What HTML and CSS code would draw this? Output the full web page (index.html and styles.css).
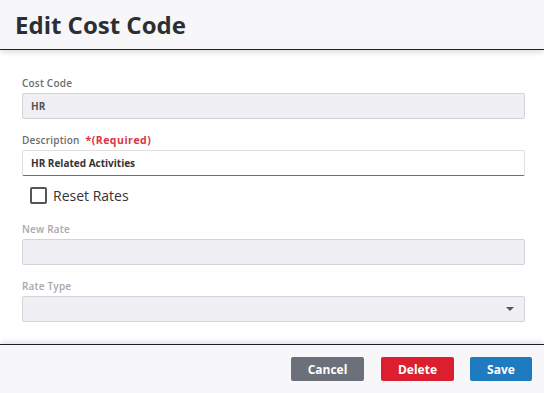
FILE: index.html
```html
<!DOCTYPE html>
<html lang="en">
<head>
    <meta charset="UTF-8">
    <meta name="viewport" content="width=device-width, initial-scale=1.0">
    <title>Edit Cost Code</title>
    <link rel="stylesheet" href="styles.css">
</head>
<body>
    <div class="modal">
        <div class="modal-header">
            <h1>Edit Cost Code</h1>
        </div>

        <div class="modal-body">
            <div class="field">
                <label>Cost Code</label>
                <div class="input disabled">HR</div>
            </div>
            <div class="field">
                <label>Description <span class="required">*(Required)</span></label>
                <div class="input active">HR Related Activities</div>
            </div>
            <div class="check-row">
                <span class="checkbox"></span>
                <span>Reset Rates</span>
            </div>
            <div class="field muted">
                <label>New Rate</label>
                <div class="input disabled"></div>
            </div>
            <div class="field muted">
                <label>Rate Type</label>
                <div class="input disabled select"><span class="caret"></span></div>
            </div>
        </div>

        <div class="modal-footer">
            <button class="btn btn-cancel">Cancel</button>
            <button class="btn btn-delete">Delete</button>
            <button class="btn btn-save">Save</button>
        </div>
    </div>
</body>
</html>
```

FILE: styles.css
```css
body {
    margin: 0;
    font-family: "Open Sans", Arial, sans-serif;
    background: #fff;
    color: #333;
}

.modal {
    display: flex;
    flex-direction: column;
    height: 100vh;
}

.modal-header {
    height: 49px;
    background: #f7f7f9;
    border-bottom: 1px solid #1e2226;
    box-shadow: 0 2px 6px rgba(0, 0, 0, 0.15);
    display: flex;
    align-items: center;
    padding-left: 15px;
    position: relative;
}

.modal-header h1 {
    margin: 0;
    font-size: 24px;
    font-weight: 700;
    color: #2b2f33;
}

.modal-body {
    flex: 1;
    padding: 27px 19px 0 22px;
}

.field {
    margin-bottom: 15px;
}

.field label {
    display: block;
    font-size: 10px;
    line-height: 12px;
    font-weight: 600;
    color: #6c6c6c;
    margin-bottom: 4px;
    letter-spacing: 0.2px;
}

.field.muted label {
    color: #a8a8a8;
}

.required {
    color: #dc3545;
    font-weight: 700;
    font-size: 10.5px;
    letter-spacing: 0.5px;
    margin-left: 3px;
}

.input {
    box-sizing: border-box;
    height: 26px;
    border: 1px solid #d4d4d8;
    border-radius: 2px;
    padding: 0 8px;
    font-size: 10px;
    font-weight: 700;
    display: flex;
    align-items: center;
}

.input.disabled {
    background: #f0f0f4;
    color: #555;
}

.input.active {
    background: #fff;
    border-color: #e0e0e0;
    border-bottom-color: #6c6c6c;
    color: #333;
}

.input.select {
    justify-content: flex-end;
    padding-right: 10px;
}

.caret {
    width: 0;
    height: 0;
    border-left: 4px solid transparent;
    border-right: 4px solid transparent;
    border-top: 4px solid #555;
}

.check-row {
    display: flex;
    align-items: center;
    gap: 6px;
    margin: -5px 0 18px 8px;
    font-size: 14px;
    color: #333;
}

.checkbox {
    box-sizing: border-box;
    width: 17px;
    height: 17px;
    border: 2px solid #555;
    border-radius: 2px;
}

.modal-footer {
    height: 48px;
    background: #f7f7f9;
    border-top: 1px solid #1e2226;
    box-shadow: 0 -2px 6px rgba(0, 0, 0, 0.12);
    display: flex;
    justify-content: flex-end;
    align-items: center;
    padding-right: 12px;
    gap: 17px;
}

.btn {
    height: 24px;
    border: none;
    border-radius: 2px;
    color: #fff;
    font-family: "Open Sans", Arial, sans-serif;
    font-size: 12px;
    font-weight: 700;
    padding: 0;
}

.btn-cancel {
    width: 73px;
    background: #6c707b;
}

.btn-delete {
    width: 73px;
    background: #dc1f2e;
}

.btn-save {
    width: 62px;
    background: #1f7bc0;
    margin-left: -1px;
}
```
